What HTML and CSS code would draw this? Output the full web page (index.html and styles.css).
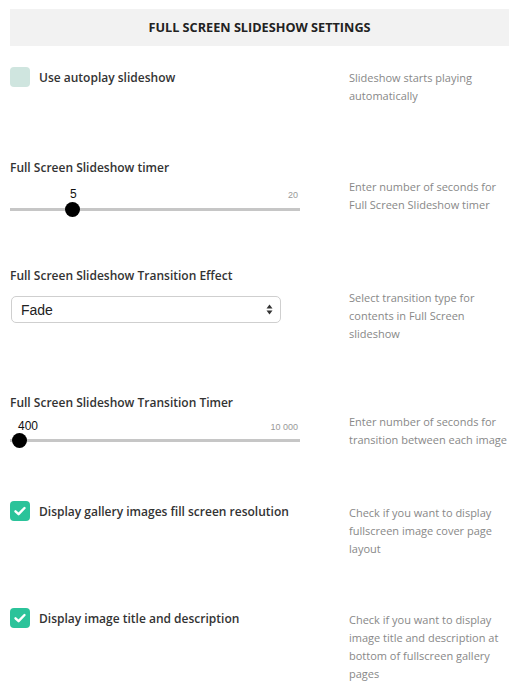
FILE: index.html
```html
<!DOCTYPE html>
<html>
<head>
<meta charset="utf-8">
<link rel="stylesheet" href="styles.css">
</head>
<body>
<div class="page">
  <div class="header">FULL SCREEN SLIDESHOW SETTINGS</div>

  <div class="row row-1">
    <div class="main check-line">
      <span class="box"></span>
      <span class="label">Use autoplay slideshow</span>
    </div>
    <div class="desc desc-check">Slideshow starts playing automatically</div>
  </div>

  <div class="row row-2">
    <div class="main">
      <div class="label">Full Screen Slideshow timer</div>
      <div class="slider">
        <div class="slider-top">
          <span class="val" style="margin-left:60px">5</span>
          <span class="max">20</span>
        </div>
        <div class="track"><span class="thumb" style="left:55px"></span></div>
      </div>
    </div>
    <div class="desc desc-field">Enter number of seconds for Full Screen Slideshow timer</div>
  </div>

  <div class="row row-3">
    <div class="main">
      <div class="label">Full Screen Slideshow Transition Effect</div>
      <div class="select">
        <span>Fade</span>
        <svg class="arrows" width="7" height="11" viewBox="0 0 7 11"><path d="M3.5 0.5 L6.5 4.5 L0.5 4.5 Z M3.5 10.5 L6.5 6.5 L0.5 6.5 Z" fill="#333"/></svg>
      </div>
    </div>
    <div class="desc desc-select">Select transition type for contents in Full Screen slideshow</div>
  </div>

  <div class="row row-4">
    <div class="main">
      <div class="label">Full Screen Slideshow Transition Timer</div>
      <div class="slider slider-b">
        <div class="slider-top">
          <span class="val" style="margin-left:8px">400</span>
          <span class="max">10 000</span>
        </div>
        <div class="track"><span class="thumb" style="left:2px"></span></div>
      </div>
    </div>
    <div class="desc desc-field">Enter number of seconds for transition between each image</div>
  </div>

  <div class="row row-5">
    <div class="main check-line">
      <span class="box checked"><svg width="20" height="20" viewBox="0 0 20 20"><path d="M5.5 10.3 L8.6 13.2 L14.5 7" fill="none" stroke="#fff" stroke-width="2.4" stroke-linecap="round" stroke-linejoin="round"/></svg></span>
      <span class="label">Display gallery images fill screen resolution</span>
    </div>
    <div class="desc desc-check2">Check if you want to display fullscreen image cover page layout</div>
  </div>

  <div class="row row-6">
    <div class="main check-line">
      <span class="box checked"><svg width="20" height="20" viewBox="0 0 20 20"><path d="M5.5 10.3 L8.6 13.2 L14.5 7" fill="none" stroke="#fff" stroke-width="2.4" stroke-linecap="round" stroke-linejoin="round"/></svg></span>
      <span class="label">Display image title and description</span>
    </div>
    <div class="desc desc-check2">Check if you want to display image title and description at bottom of fullscreen gallery pages</div>
  </div>
</div>
</body>
</html>
```

FILE: styles.css
```css
* { box-sizing: border-box; }
html, body { margin: 0; padding: 0; background: #fff; }
body {
  font-family: "Open Sans", "Liberation Sans", sans-serif;
  color: #333;
}
.page {
  width: 515px;
  padding: 9px 6px 0 10px;
}
.header {
  height: 37px;
  line-height: 37px;
  background: #f2f2f2;
  text-align: center;
  font-weight: 700;
  font-size: 12.7px;
  color: #222;
}
.row {
  display: grid;
  grid-template-columns: 339px 1fr;
  align-items: start;
}
.row-1 { margin-top: 21px; padding-bottom: 54px; }
.row-2 { padding-bottom: 53px; }
.row-3 { padding-bottom: 51px; }
.row-4 { padding-bottom: 52px; }
.row-5 { padding-bottom: 50px; }
.label {
  font-weight: 600;
  font-size: 12px;
  line-height: 18px;
  color: #333;
}
.check-line {
  display: flex;
  align-items: center;
  gap: 9px;
  height: 20px;
}
.check-line .label { padding-top: 1px; }
.box {
  width: 20px;
  height: 20px;
  border-radius: 4px;
  background: #cfe5df;
  flex: none;
  display: block;
}
.box.checked { background: #2bc39a; }
.box svg { display: block; }
.desc {
  font-size: 11px;
  line-height: 18px;
  color: #888;
}
.desc-check { padding-top: 2px; }
.desc-check2 { padding-top: 3px; }
.desc-field { padding-top: 19px; }
.desc-select { padding-top: 22px; }

.slider { width: 290px; margin-top: 10px; }
.slider-b { margin-top: 7px; }
.slider-top {
  display: flex;
  justify-content: space-between;
  align-items: baseline;
  height: 14px;
  line-height: 14px;
  font-family: "Liberation Sans", Arial, sans-serif;
}
.val { font-size: 12px; color: #111; }
.max { font-size: 9px; color: #999; margin-right: 2px; }
.track {
  position: relative;
  height: 3px;
  background: #c6c6c6;
  margin-top: 7px;
}
.slider-b .track { margin-top: 6px; }
.thumb {
  position: absolute;
  top: -6px;
  width: 15px;
  height: 15px;
  border-radius: 50%;
  background: #000;
}
.select {
  margin-top: 11px;
  margin-left: 1px;
  width: 270px;
  height: 27px;
  border: 1px solid #cfcfcf;
  border-radius: 5px;
  display: flex;
  align-items: center;
  justify-content: space-between;
  padding: 0 7px 0 9px;
  font-family: "Liberation Sans", Arial, sans-serif;
  font-size: 14px;
  color: #222;
  background: #fff;
}
.arrows { display: block; }
```
